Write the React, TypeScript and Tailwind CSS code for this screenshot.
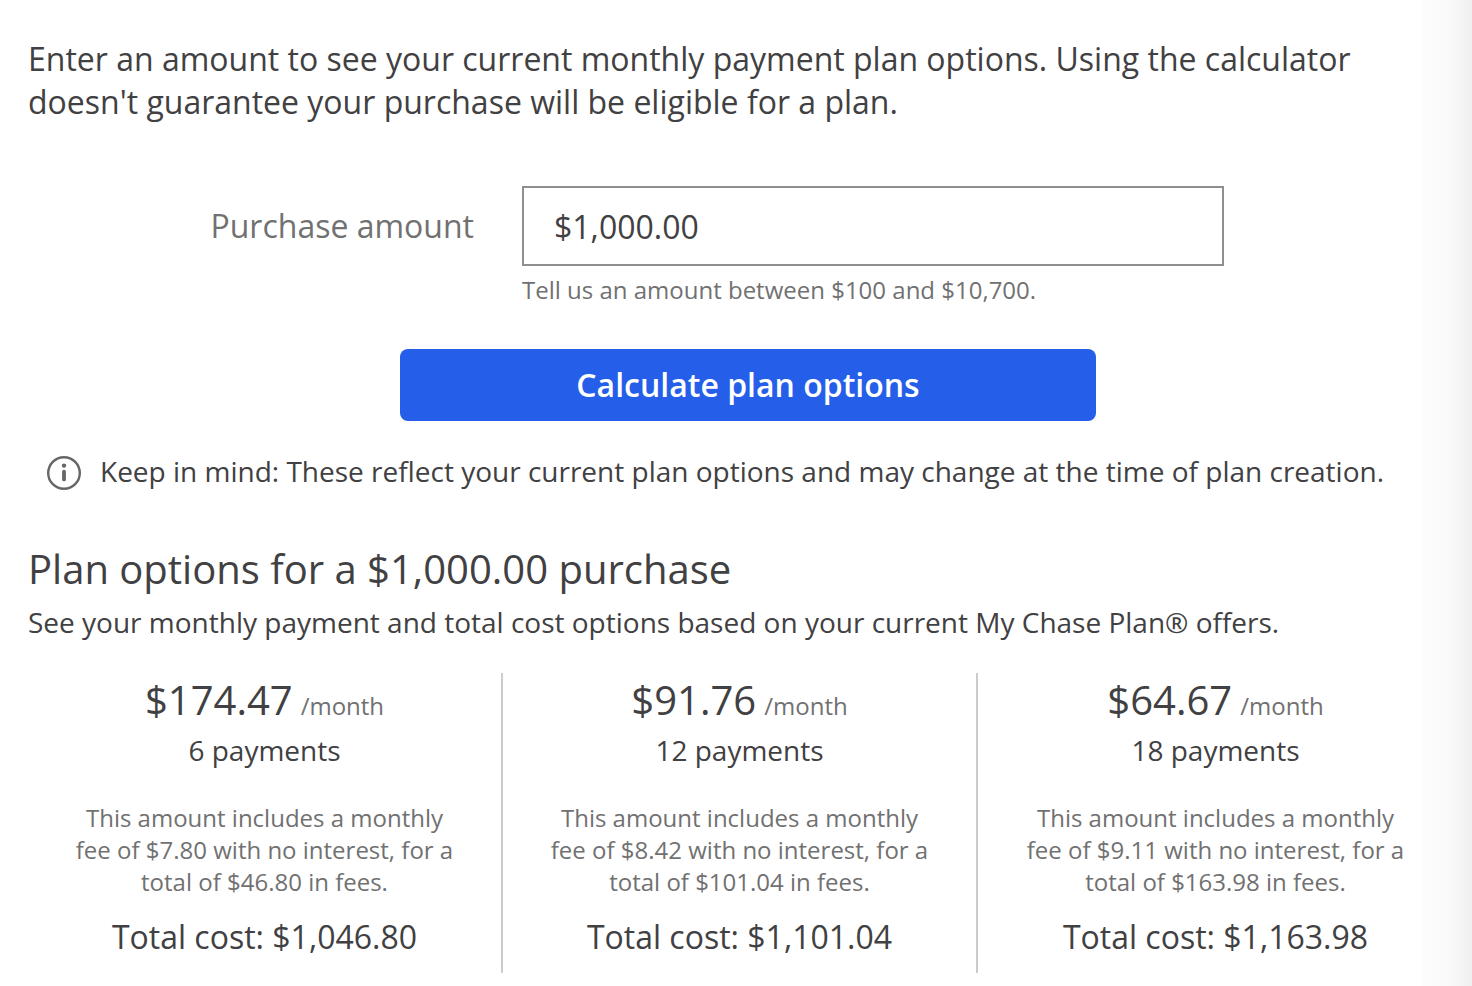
import { useState } from "react";

const plans = [
  { monthly: "$174.47", payments: 6, fee: "$7.80", fees: "$46.80", total: "$1,046.80" },
  { monthly: "$91.76", payments: 12, fee: "$8.42", fees: "$101.04", total: "$1,101.04" },
  { monthly: "$64.67", payments: 18, fee: "$9.11", fees: "$163.98", total: "$1,163.98" },
];

function InfoIcon() {
  return (
    <svg className="size-9 shrink-0" viewBox="0 0 36 36" fill="none" aria-hidden="true">
      <circle cx="18" cy="18" r="15.8" stroke="#666" strokeWidth="2.4" />
      <circle cx="18" cy="10.6" r="2.2" fill="#666" />
      <path d="M18 16.6v7.8" stroke="#666" strokeWidth="3.8" strokeLinecap="round" />
    </svg>
  );
}

export default function App() {
  const [amount, setAmount] = useState("$1,000.00");

  return (
    <main className="relative min-h-screen bg-white pt-[37px] pr-1 pb-3 pl-7 font-['Open_Sans',sans-serif] text-[#414042]">
      <p className="pr-6 text-[32px] leading-[43px]">
        Enter an amount to see your current monthly payment plan options. Using the calculator doesn't guarantee your
        purchase will be eligible for a plan.
      </p>

      <form onSubmit={(event) => event.preventDefault()}>
        <div className="mt-[63px] flex">
          <label htmlFor="amount" className="w-[446px] shrink-0 text-right text-[32px] leading-[80px] text-[#717171]">
            Purchase amount
          </label>
          <div className="ml-12 w-[702px]">
            <input
              id="amount"
              aria-describedby="amount-hint"
              value={amount}
              onChange={(event) => setAmount(event.target.value)}
              className="block h-20 w-full border-2 border-[#8f8f8f] px-[30px] text-[32px]"
            />
            <p id="amount-hint" className="mt-2 text-2xl leading-8 text-[#717171]">
              Tell us an amount between $100 and $10,700.
            </p>
          </div>
        </div>
        <button
          type="submit"
          className="mx-auto mt-[43px] block h-[72px] w-[696px] rounded-lg bg-[#255ee9] text-[32px] font-semibold text-white"
        >
          Calculate plan options
        </button>
      </form>

      <div className="mt-[30px] flex items-start gap-[18px] pl-[18px]">
        <div className="pt-1">
          <InfoIcon />
        </div>
        <p className="text-[28px] leading-10">
          Keep in mind: These reflect your current plan options and may change at the time of plan creation.
        </p>
      </div>

      <h1 className="mt-[51px] text-[40px] leading-[54px]">Plan options for a $1,000.00 purchase</h1>
      <p className="mt-1.5 text-[28px] leading-10">
        See your monthly payment and total cost options based on your current My Chase Plan® offers.
      </p>

      <ul className="mt-[31px] mr-[15px] grid grid-cols-3 divide-x-2 divide-[#cccccc]">
        {plans.map((plan) => (
          <li key={plan.payments} className="px-11 pb-3.5 text-center">
            <p className="flex items-baseline justify-center gap-2 text-[40px] leading-[54px]">
              <span>{plan.monthly}</span>
              <span className="text-2xl text-[#717171]">/month</span>
            </p>
            <p className="mt-[3px] text-[28px] leading-10">{`${plan.payments} payments`}</p>
            <p className="mt-8 text-2xl leading-8 text-[#717171]">
              {`This amount includes a monthly fee of ${plan.fee} with no interest, for a total of ${plan.fees} in fees.`}
            </p>
            <p className="mt-[17px] text-[32px] leading-[44px]">{`Total cost: ${plan.total}`}</p>
          </li>
        ))}
      </ul>

      <div className="pointer-events-none absolute inset-y-0 right-0 w-[50px] bg-linear-to-r from-black/1 via-black/2 to-black/6" />
    </main>
  );
}
